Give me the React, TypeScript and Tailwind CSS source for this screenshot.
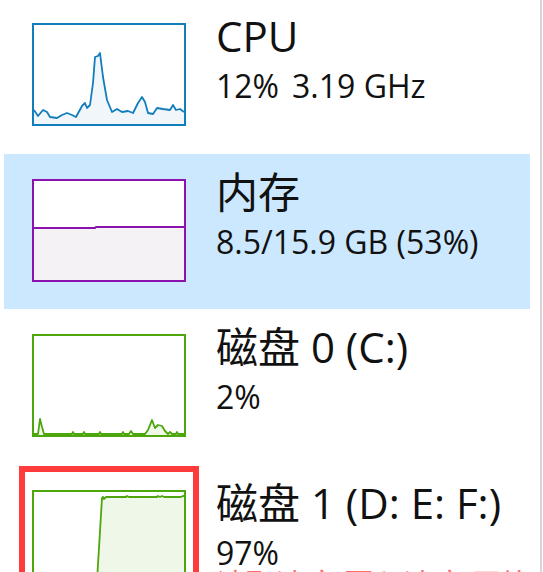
import React from "react";

type Pt = [number, number];

// points are page coordinates, shifted into the graph box with a transform
const cpuLine: Pt[] = [
  [34, 110], [38, 116], [43, 110], [47, 112], [50, 117], [57, 118], [62, 115], [67, 113],
  [72, 115], [76, 117], [82, 106], [85, 103], [87, 108], [90, 105], [93, 83], [95, 57],
  [98, 56], [100, 53], [103, 77], [107, 100], [112, 112], [117, 109], [122, 112], [128, 111],
  [133, 113], [138, 103], [142, 97], [145, 102], [148, 113], [153, 114], [157, 108], [163, 109],
  [170, 110], [173, 105], [176, 110], [180, 109], [184, 112],
];

const memLine: Pt[] = [[34, 227], [95, 227], [96, 226], [184, 226]];

const disk0Line: Pt[] = [
  [34, 434], [38, 434], [40, 419], [42, 427], [44, 434], [72, 434], [73, 432], [74, 434],
  [83, 434], [84, 432], [85, 434], [99, 434], [100, 432], [101, 434], [122, 434], [123, 432],
  [124, 434], [129, 434], [131, 431], [133, 434], [145, 434], [148, 430], [152, 420], [155, 428],
  [158, 425], [162, 426], [165, 431], [168, 434], [170, 432], [172, 434], [176, 434], [177, 432],
  [178, 434], [184, 434],
];

const disk1Line: Pt[] = [
  [97, 580], [102, 497], [103, 496], [104, 498], [106, 496], [126, 496], [127, 495], [129, 496],
  [157, 496], [158, 495], [160, 496], [162, 495], [164, 496], [181, 496], [183, 495], [184, 495],
];

function Graph({ line, ox, oy, stroke, fill, border }: { line: Pt[]; ox: number; oy: number; stroke: string; fill: string; border: string }) {
  const pts = line.map((p) => `${p[0]},${p[1]}`).join(" ");
  const first = line[0];
  const last = line[line.length - 1];
  const area = `${first[0]},${oy + 200} ${pts} ${last[0]},${oy + 200}`;
  return (
    <div className={`h-[103px] w-[154px] border-2 bg-white ${border}`}>
      <svg width="150" height="99" viewBox="0 0 150 99" className="block overflow-hidden">
        <g transform={`translate(${-ox},${-oy})`}>
          <polygon points={area} fill={fill} />
          <polyline points={pts} fill="none" stroke={stroke} strokeWidth="1.8" strokeLinejoin="round" />
        </g>
      </svg>
    </div>
  );
}

function Row({ selected, graph, title, sub, children }: { selected?: boolean; graph: React.ReactNode; title: React.ReactNode; sub: React.ReactNode; children?: React.ReactNode }) {
  return (
    <div className={`relative flex h-[155.5px] shrink-0 ${selected ? "bg-[#cce8ff]" : ""}`}>
      <div className="ml-[28px] mt-[25px]">{graph}</div>
      <div className="ml-[30px] flex flex-col">
        <div className="mt-[14px] h-[48px] whitespace-nowrap text-[42px] leading-[48px]">{title}</div>
        <div className="mt-[8px] h-[36px] whitespace-nowrap text-[32px] leading-[36px]">{sub}</div>
        {children}
      </div>
    </div>
  );
}

export default function App() {
  return (
    <div
      className="flex h-[572px] w-[543px] overflow-hidden bg-white text-[#111]"
      style={{ fontFamily: "'Open Sans', 'Noto Sans CJK SC', sans-serif" }}
    >
      <div className="flex w-[542px] flex-col border-r-2 border-[#d6d6d6]">
        <div className="-mt-[2px] ml-[4px] mr-[10px] flex flex-col">
          <Row
            graph={<Graph line={cpuLine} ox={34} oy={25} stroke="#117dbb" fill="#f1f6fa" border="border-[#117dbb]" />}
            title="CPU"
            sub={<>12%<span className="ml-[13px]">3.19 GHz</span></>}
          />
          <Row
            selected
            graph={<Graph line={memLine} ox={34} oy={180} stroke="#8b12ae" fill="#f4f2f4" border="border-[#8b12ae]" />}
            title="内存"
            sub="8.5/15.9 GB (53%)"
          />
          <Row
            graph={<Graph line={disk0Line} ox={34} oy={336} stroke="#4da60c" fill="#eff7e9" border="border-[#4da60c]" />}
            title="磁盘 0 (C:)"
            sub="2%"
          />
          <Row
            graph={<Graph line={disk1Line} ox={34} oy={491} stroke="#4da60c" fill="#eff7e9" border="border-[#4da60c]" />}
            title="磁盘 1 (D: E: F:)"
            sub="97%"
          >
            <div className="mt-[-5px] whitespace-nowrap text-[30px] leading-[36px] text-[#ff6b6b]">读取速度 写入速度 平均响应</div>
          </Row>
        </div>
      </div>
      {/* red annotation around the disk 1 graph */}
      <div className="pointer-events-none absolute left-[19px] top-[466px] h-[130px] w-[180px] border-[6px] border-[#ff3b3b]" />
    </div>
  );
}
